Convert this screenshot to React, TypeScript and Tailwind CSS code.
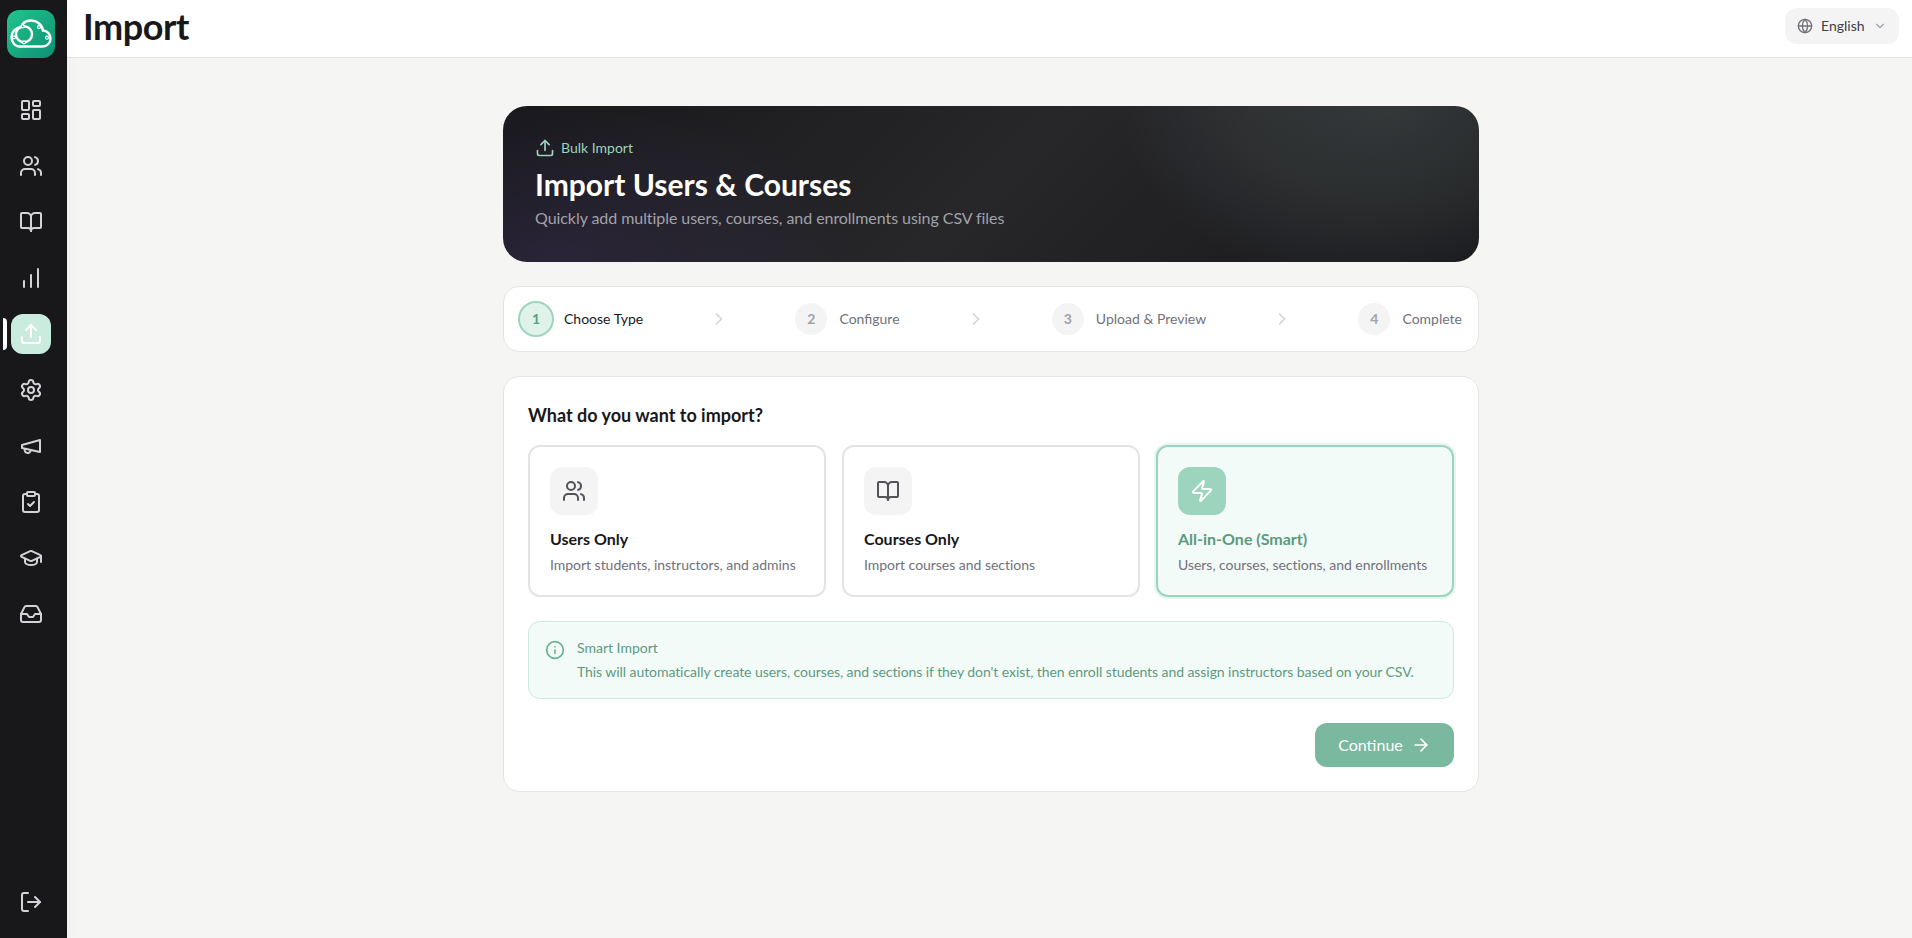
import React from "react";
import {
  LayoutDashboard, Users, BookOpen, ChartNoAxesColumnIncreasing, Upload, Settings,
  ClipboardCheck, GraduationCap, Inbox, LogOut, Globe, ChevronDown, ChevronRight, Zap, Info, ArrowRight,
} from "lucide-react";

function Logo() {
  return (
    <div className="h-12 w-12 rounded-xl bg-[linear-gradient(135deg,#22c58b,#0d9075)] flex items-center justify-center">
      <svg viewBox="0 0 48 48" className="h-12 w-12" fill="none" stroke="#fff" strokeWidth="2.4">
        <path d="M12.5 36.5H35.5C40.5 36.5 43.5 32.5 43.5 28.5C43.5 24 40 20.5 36 20.5C35 14.5 30 10.5 24 10.5C19.5 10.5 15.5 13 14 17C8.5 17.5 4.5 22 4.5 27C4.5 32.5 8 36.5 12.5 36.5Z" />
        <circle cx="17" cy="24.3" r="8" />
        <g fill="#15a880" strokeWidth="1.3">
          <circle cx="15.7" cy="16.4" r="1.5" />
          <circle cx="32" cy="17" r="1.5" />
          <circle cx="40" cy="27.7" r="1.5" />
          <circle cx="17" cy="32.3" r="1.5" />
          <circle cx="7" cy="27.3" r="1.5" />
        </g>
      </svg>
    </div>
  );
}

function MegaphoneOld({ className }: { className?: string }) {
  return (
    <svg viewBox="0 0 24 24" className={className} fill="none" stroke="currentColor" strokeWidth="2" strokeLinecap="round" strokeLinejoin="round">
      <path d="m3 11 18-5v12L3 14v-3z" />
      <path d="M11.6 16.8a3 3 0 1 1-5.8-1.6" />
    </svg>
  );
}

const nav = [LayoutDashboard, Users, BookOpen, ChartNoAxesColumnIncreasing, Upload, Settings, MegaphoneOld, ClipboardCheck, GraduationCap, Inbox];

function Sidebar() {
  return (
    <aside className="w-[67px] shrink-0 bg-[#18181b] flex flex-col items-center pr-[5px] pt-[10px] pb-4 shadow-[0_0_12px_rgba(0,0,0,0.04)] z-10">
      <Logo />
      <nav className="mt-8 flex flex-col gap-4">
        {nav.map((Icon, i) => (
          <div key={i} className="relative">
            {i === 4 && <span className="absolute left-[-8px] top-1 h-8 w-1 rounded-r bg-white" />}
            <div className={`h-10 w-10 rounded-xl flex items-center justify-center ${i === 4 ? "bg-[#c9ecdf] text-white" : "text-[#d4d4d8]"}`}>
              <Icon className="h-6 w-6" />
            </div>
          </div>
        ))}
      </nav>
      <div className="mt-auto h-10 w-10 flex items-center justify-center text-[#d4d4d8]">
        <LogOut className="h-6 w-6" strokeWidth={2} />
      </div>
    </aside>
  );
}

function Step({ n, label, active }: { n: number; label: string; active?: boolean }) {
  return (
    <div className="flex items-center gap-3">
      <div className={`h-8 w-8 rounded-full flex items-center justify-center text-sm font-bold ${active ? "bg-[#dff3eb] text-[#5a9e82] ring-2 ring-[#9dd4bd]" : "bg-[#f4f4f5] text-[#a1a1aa]"}`}>{n}</div>
      <span className={`text-sm ${active ? "text-[#18181b]" : "text-[#71717a]"}`}>{label}</span>
    </div>
  );
}

function Chevron() {
  return <ChevronRight className="h-5 w-5 text-[#d4d4d8]" strokeWidth={2} />;
}

function Option({ Icon, title, desc, selected }: { Icon: typeof Users; title: string; desc: string; selected?: boolean }) {
  return (
    <div className={`rounded-xl border-2 p-5 ${selected ? "border-[#9dd4bd] bg-[#f3fbf8] ring-2 ring-[#e6f5ef]" : "border-[#e4e4e7] bg-white"}`}>
      <div className={`h-12 w-12 rounded-xl flex items-center justify-center ${selected ? "bg-[#9dd4bd] text-white" : "bg-[#f4f4f5] text-[#52525b]"}`}>
        <Icon className="h-6 w-6" />
      </div>
      <div className={`mt-3 text-base font-bold ${selected ? "text-[#5c9a80]" : "text-[#18181b]"}`}>{title}</div>
      <div className="mt-1 text-sm tracking-[-0.03px] text-[#71717a]">{desc}</div>
    </div>
  );
}

export default function App() {
  return (
    <div className="flex h-screen w-full overflow-hidden bg-[#f5f5f4] font-['Lato',sans-serif]">
      <Sidebar />
      <div className="flex-1 flex flex-col min-w-0">
        <header className="h-[58px] shrink-0 bg-white border-b border-[#e4e4e7] flex items-start justify-between pl-4 pr-[13px] pt-2">
          <h1 className="text-4xl leading-9 tracking-[-0.4px] font-bold text-[#18181b]">Import</h1>
          <button className="h-9 w-[114px] rounded-xl bg-[#f4f4f5] flex items-center gap-2 pl-3 text-sm text-[#3f3f46]">
            <Globe className="h-4 w-4 text-[#71717a]" />
            <span>English</span>
            <ChevronDown className="h-3.5 w-3.5 text-[#a1a1aa]" />
          </button>
        </header>
        <main className="flex-1 pl-[3px] pt-12">
          <div className="mx-auto w-[976px] flex flex-col gap-6">
            <section className="h-[156px] rounded-3xl p-8 bg-[radial-gradient(ellipse_270px_190px_at_91%_0%,rgba(185,210,200,0.14),rgba(185,210,200,0.09)_50%,transparent_100%),radial-gradient(ellipse_300px_170px_at_5%_100%,rgba(139,92,246,0.11),transparent_100%),linear-gradient(135deg,#18181b,#27272a_50%,#18181b)]">
              <div className="flex items-center gap-1.5 text-sm text-[#9dd4bd]">
                <Upload className="h-5 w-5" />
                <span>Bulk Import</span>
              </div>
              <h2 className="mt-2 text-3xl font-bold text-white">Import Users &amp; Courses</h2>
              <p className="mt-1 text-base tracking-[-0.06px] text-[#a1a1aa]">Quickly add multiple users, courses, and enrollments using CSV files</p>
            </section>

            <section className="h-[66px] rounded-2xl border border-[#e4e4e7] bg-white px-4 flex items-center justify-between">
              <Step n={1} label="Choose Type" active />
              <Chevron />
              <Step n={2} label="Configure" />
              <Chevron />
              <Step n={3} label="Upload & Preview" />
              <Chevron />
              <Step n={4} label="Complete" />
            </section>

            <section className="rounded-2xl border border-[#e4e4e7] bg-white p-6">
              <h3 className="text-lg font-bold text-[#18181b]">What do you want to import?</h3>
              <div className="mt-4 grid grid-cols-3 gap-4">
                <Option Icon={Users} title="Users Only" desc="Import students, instructors, and admins" />
                <Option Icon={BookOpen} title="Courses Only" desc="Import courses and sections" />
                <Option Icon={Zap} title="All-in-One (Smart)" desc="Users, courses, sections, and enrollments" selected />
              </div>
              <div className="mt-6 rounded-xl border border-[#c9ecdf] bg-[#f3fbf8] p-4 flex gap-3 text-sm text-[#5c9a80]">
                <Info className="h-5 w-5 shrink-0 mt-0.5 text-[#6bb295]" />
                <div>
                  <div>Smart Import</div>
                  <div className="mt-1 tracking-[-0.07px]">This will automatically create users, courses, and sections if they don't exist, then enroll students and assign instructors based on your CSV.</div>
                </div>
              </div>
              <div className="mt-6 flex justify-end">
                <button className="h-11 w-[139px] rounded-xl bg-[#7ab89f] text-white text-base flex items-center justify-center gap-2">
                  <span>Continue</span>
                  <ArrowRight className="h-5 w-5" />
                </button>
              </div>
            </section>
          </div>
        </main>
      </div>
    </div>
  );
}
